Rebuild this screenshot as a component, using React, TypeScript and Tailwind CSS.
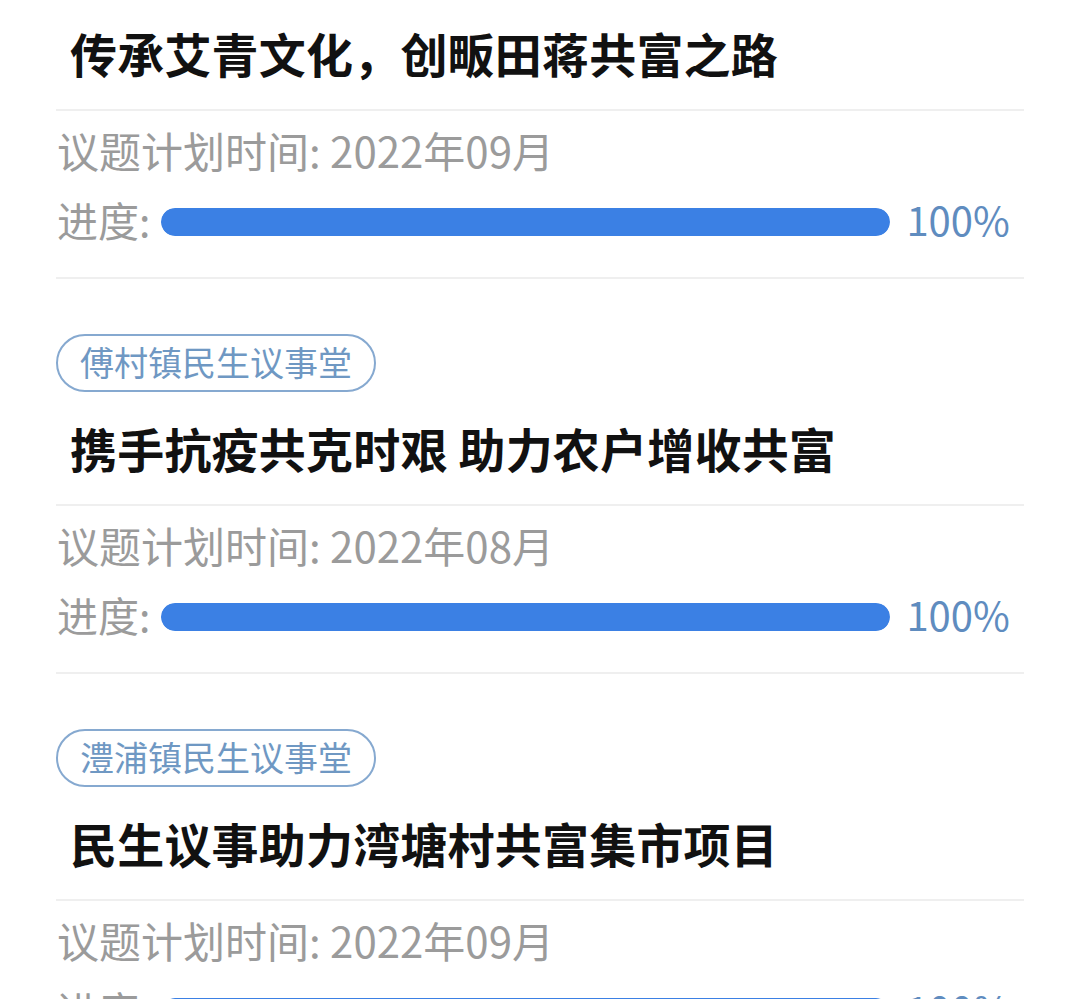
import React from 'react';

interface Topic {
  tag?: string;
  title: string;
  month: string;
  progress: number;
}

const topics: Topic[] = [
  { title: '传承艾青文化，创畈田蒋共富之路', month: '2022年09月', progress: 100 },
  { tag: '傅村镇民生议事堂', title: '携手抗疫共克时艰 助力农户增收共富', month: '2022年08月', progress: 100 },
  { tag: '澧浦镇民生议事堂', title: '民生议事助力湾塘村共富集市项目', month: '2022年09月', progress: 100 },
];

const TopicCard = ({ topic }: { topic: Topic }) => (
  <div>
    {topic.tag && (
      <div className="mt-[55px] flex">
        <span className="inline-flex h-[58px] items-center rounded-full border-2 border-[#86a9d0] px-[22px] pb-[2px] text-[34px] leading-none text-[#6f98c3]">
          {topic.tag}
        </span>
      </div>
    )}
    <h2
      className={`${topic.tag ? 'mt-[26px]' : ''} h-[60px] pl-[14px] text-[47px] font-bold leading-[60px] tracking-[0.2px] text-[#111111]`}
    >
      {topic.title}
    </h2>
    <div className="mt-[26px] h-[2px] bg-[#efefef]" />
    <div className="mt-[15px] h-[48px] pl-[1px] text-[42px] leading-[48px] text-[#9b9b9b]">
      议题计划时间: {topic.month}
    </div>
    <div className="mt-[24px] flex h-[48px] items-center">
      <span className="pb-[7px] pl-[1px] text-[41px] leading-[48px] text-[#9b9b9b]">进度:</span>
      <div className="ml-[11px] h-[28px] w-[729px] overflow-hidden rounded-full bg-[#e6eefa]">
        <div className="h-full rounded-full bg-[#3b80e4]" style={{ width: `${topic.progress}%` }} />
      </div>
      <span className="ml-[16px] pb-[7px] text-[40px] leading-[48px] text-[#5f8cbf]">{topic.progress}%</span>
    </div>
    <div className="mt-[31px] h-[2px] bg-[#efefef]" />
  </div>
);

export default function App() {
  return (
    <div
      className="h-[999px] overflow-hidden bg-white px-[56px] pt-[23px]"
      style={{ fontFamily: '"Noto Sans CJK SC", "Noto Sans", sans-serif' }}
    >
      {topics.map((t) => (
        <TopicCard key={t.title} topic={t} />
      ))}
    </div>
  );
}
